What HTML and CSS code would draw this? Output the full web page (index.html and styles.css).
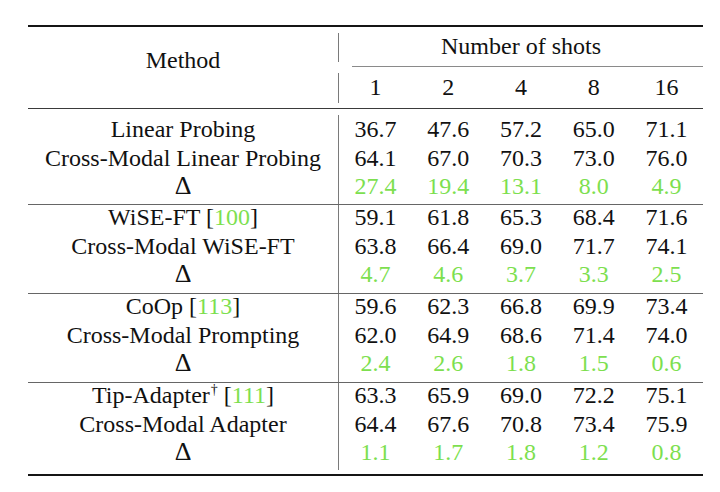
FILE: index.html
```html
<!DOCTYPE html>
<html>
<head>
<meta charset="utf-8">
<link rel="stylesheet" href="styles.css">
</head>
<body class="xt-page">
<div class="xt-results">
  <div class="xt-head">
    <div class="xt-hmethod"><div class="xt-c">Method</div></div>
    <div class="xt-hvline"><span class="xt-seg xt-seg1"></span><span class="xt-seg xt-seg2"></span></div>
    <div class="xt-hright">
      <div class="xt-htitle"><div class="xt-c">Number of shots</div></div>
      <div class="xt-cmid"></div>
      <div class="xt-hshots">
        <div class="xt-c">1</div><div class="xt-c">2</div><div class="xt-c">4</div><div class="xt-c">8</div><div class="xt-c">16</div>
      </div>
    </div>
  </div>

  <div class="xt-block xt-b1">
    <div class="xt-mcol">
      <div class="xt-c">Linear Probing</div>
      <div class="xt-c">Cross-Modal Linear Probing</div>
      <div class="xt-c xt-delta">Δ</div>
    </div>
    <div class="xt-ncol"><div class="xt-c">36.7</div><div class="xt-c">64.1</div><div class="xt-c xt-gr">27.4</div></div>
    <div class="xt-ncol"><div class="xt-c">47.6</div><div class="xt-c">67.0</div><div class="xt-c xt-gr">19.4</div></div>
    <div class="xt-ncol"><div class="xt-c">57.2</div><div class="xt-c">70.3</div><div class="xt-c xt-gr">13.1</div></div>
    <div class="xt-ncol"><div class="xt-c">65.0</div><div class="xt-c">73.0</div><div class="xt-c xt-gr">8.0</div></div>
    <div class="xt-ncol"><div class="xt-c">71.1</div><div class="xt-c">76.0</div><div class="xt-c xt-gr">4.9</div></div>
  </div>

  <div class="xt-block">
    <div class="xt-mcol">
      <div class="xt-c">WiSE-FT [<span class="xt-gr">100</span>]</div>
      <div class="xt-c">Cross-Modal WiSE-FT</div>
      <div class="xt-c xt-delta">Δ</div>
    </div>
    <div class="xt-ncol"><div class="xt-c">59.1</div><div class="xt-c">63.8</div><div class="xt-c xt-gr">4.7</div></div>
    <div class="xt-ncol"><div class="xt-c">61.8</div><div class="xt-c">66.4</div><div class="xt-c xt-gr">4.6</div></div>
    <div class="xt-ncol"><div class="xt-c">65.3</div><div class="xt-c">69.0</div><div class="xt-c xt-gr">3.7</div></div>
    <div class="xt-ncol"><div class="xt-c">68.4</div><div class="xt-c">71.7</div><div class="xt-c xt-gr">3.3</div></div>
    <div class="xt-ncol"><div class="xt-c">71.6</div><div class="xt-c">74.1</div><div class="xt-c xt-gr">2.5</div></div>
  </div>

  <div class="xt-block">
    <div class="xt-mcol">
      <div class="xt-c">CoOp [<span class="xt-gr">113</span>]</div>
      <div class="xt-c">Cross-Modal Prompting</div>
      <div class="xt-c xt-delta">Δ</div>
    </div>
    <div class="xt-ncol"><div class="xt-c">59.6</div><div class="xt-c">62.0</div><div class="xt-c xt-gr">2.4</div></div>
    <div class="xt-ncol"><div class="xt-c">62.3</div><div class="xt-c">64.9</div><div class="xt-c xt-gr">2.6</div></div>
    <div class="xt-ncol"><div class="xt-c">66.8</div><div class="xt-c">68.6</div><div class="xt-c xt-gr">1.8</div></div>
    <div class="xt-ncol"><div class="xt-c">69.9</div><div class="xt-c">71.4</div><div class="xt-c xt-gr">1.5</div></div>
    <div class="xt-ncol"><div class="xt-c">73.4</div><div class="xt-c">74.0</div><div class="xt-c xt-gr">0.6</div></div>
  </div>

  <div class="xt-block xt-b4">
    <div class="xt-mcol">
      <div class="xt-c">Tip-Adapter<sup class="xt-dag">†</sup> [<span class="xt-gr">111</span>]</div>
      <div class="xt-c">Cross-Modal Adapter</div>
      <div class="xt-c xt-delta">Δ</div>
    </div>
    <div class="xt-ncol"><div class="xt-c">63.3</div><div class="xt-c">64.4</div><div class="xt-c xt-gr">1.1</div></div>
    <div class="xt-ncol"><div class="xt-c">65.9</div><div class="xt-c">67.6</div><div class="xt-c xt-gr">1.7</div></div>
    <div class="xt-ncol"><div class="xt-c">69.0</div><div class="xt-c">70.8</div><div class="xt-c xt-gr">1.8</div></div>
    <div class="xt-ncol"><div class="xt-c">72.2</div><div class="xt-c">73.4</div><div class="xt-c xt-gr">1.2</div></div>
    <div class="xt-ncol"><div class="xt-c">75.1</div><div class="xt-c">75.9</div><div class="xt-c xt-gr">0.8</div></div>
  </div>
</div>
</body>
</html>
```

FILE: styles.css
```css
.xt-page {
  margin: 0;
  background: #ffffff;
  color: #111111;
  font-family: "Liberation Serif", "Times New Roman", Tinos, serif;
  font-size: 24px;
}

.xt-results {
  margin: 25px 0 0 28px;
  width: 675px;
  border-top: 2px solid #151515;
  border-bottom: 2px solid #151515;
}

.xt-c {
  font-family: "Liberation Serif", "Times New Roman", Tinos, serif;
  height: 24px;
  line-height: 24px;
  white-space: nowrap;
  text-align: center;
}

.xt-head {
  display: grid;
  grid-template-columns: 310px 1px 1fr;
  border-bottom: 1px solid #3a3a3a;
}

.xt-hmethod {
  padding-top: 21px;
}

.xt-hvline {
  display: flex;
  flex-direction: column;
}

.xt-seg {
  display: block;
  width: 1px;
  background: #7a7a7a;
}

.xt-seg1 {
  margin-top: 6px;
  height: 29px;
}

.xt-seg2 {
  margin-top: 11px;
  height: 30px;
}

.xt-htitle {
  padding: 7px 0 8px;
}

.xt-cmid {
  height: 1px;
  margin-left: 13px;
  background: #8a8a8a;
}

.xt-hshots {
  display: grid;
  grid-template-columns: repeat(5, 1fr);
  padding: 8px 0 9px;
}

.xt-block {
  display: flex;
  border-top: 1px solid #666666;
}

.xt-b1 {
  border-top: none;
}

.xt-mcol {
  width: 311px;
  box-sizing: border-box;
  border-right: 1px solid #7a7a7a;
  display: flex;
  flex-direction: column;
  gap: 4.5px;
  padding: 0 0 7px;
}

.xt-ncol {
  flex: 1;
  display: flex;
  flex-direction: column;
  gap: 4.5px;
  padding: 0 0 7px;
}

.xt-b1 .xt-mcol {
  margin-top: 6px;
  padding-top: 2px;
  padding-bottom: 6px;
}

.xt-b1 .xt-ncol {
  padding-top: 8px;
  padding-bottom: 6px;
}

.xt-b4 .xt-mcol {
  padding-bottom: 6px;
  margin-bottom: 4px;
}

.xt-b4 .xt-ncol {
  padding-bottom: 10px;
}

.xt-gr {
  color: #7ddf4f;
}

.xt-delta {
  font-size: 26px;
}

.xt-dag {
  font-size: 14px;
  line-height: 0;
  vertical-align: 9px;
  margin-left: 1px;
}
```
